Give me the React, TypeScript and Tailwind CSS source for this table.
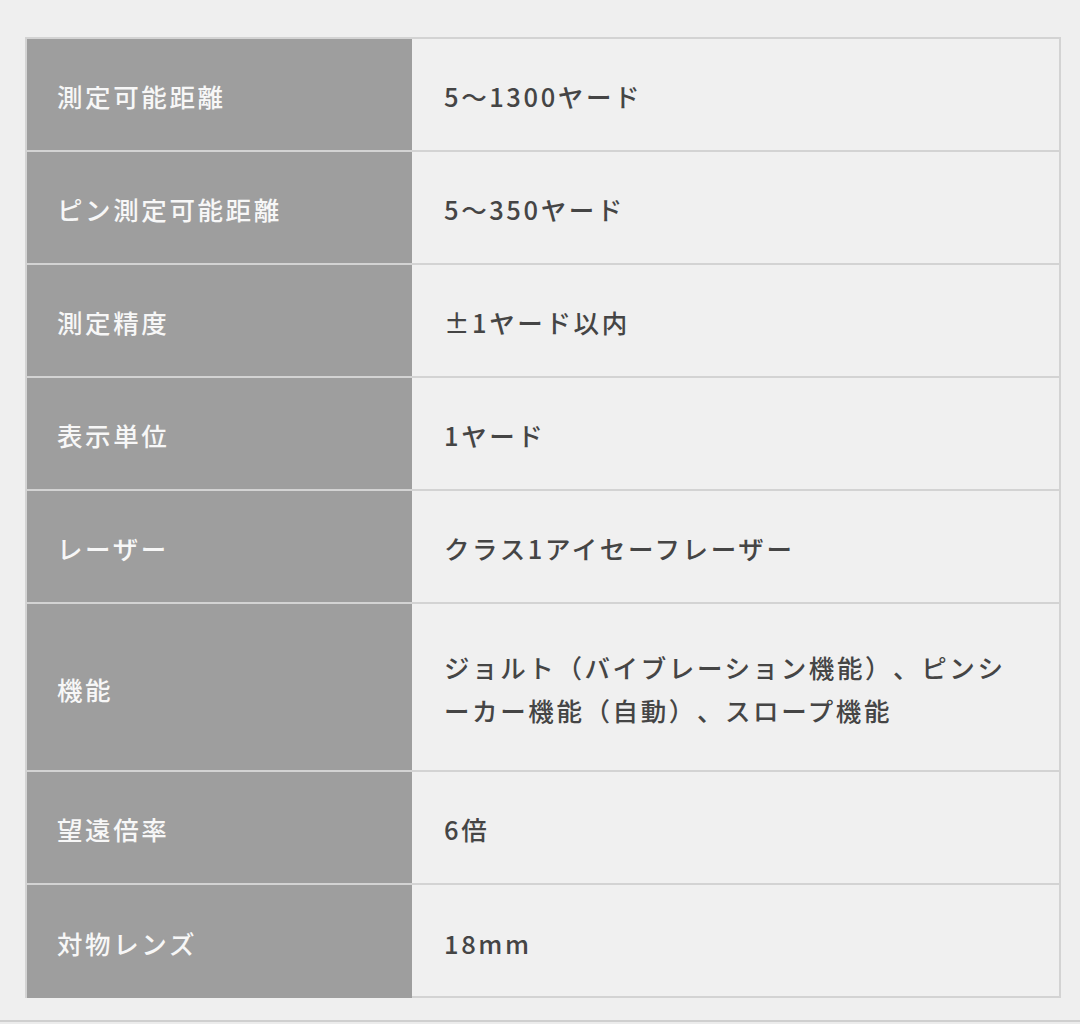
import React from "react";

const rows: { label: string; value: React.ReactNode; tall?: boolean }[] = [
  { label: "測定可能距離", value: "5～1300ヤード" },
  { label: "ピン測定可能距離", value: "5～350ヤード" },
  { label: "測定精度", value: "±1ヤード以内" },
  { label: "表示単位", value: "1ヤード" },
  { label: "レーザー", value: "クラス1アイセーフレーザー" },
  {
    label: "機能",
    value: (
      <>
        ジョルト（バイブレーション機能）、ピンシ
        <br />
        ーカー機能（自動）、スロープ機能
      </>
    ),
    tall: true,
  },
  { label: "望遠倍率", value: "6倍" },
  { label: "対物レンズ", value: "18mm" },
];

export default function App() {
  return (
    <div
      className="w-[1080px] h-[1024px] bg-[#efefef] overflow-hidden flex flex-col [text-spacing-trim:space-all]"
      style={{ fontFamily: '"Noto Sans CJK JP", "Noto Sans", sans-serif' }}
    >
      <div className="ml-[25px] mt-[37px] w-[1036px] h-[961px] border-2 border-[#d3d3d3] bg-[#f0f0f0]">
        {rows.map((r, i) => (
          <div
            key={i}
            className={
              "grid grid-cols-[385px_1fr] " +
              (r.tall ? "h-[168px] " : "h-[113px] ") +
              (i < rows.length - 1 ? "border-b-2 border-[#d3d3d3]" : "")
            }
          >
            <div className="bg-[#9e9e9e] flex items-center pl-[30px] pt-[2px] text-[25.5px] tracking-[2.6px] text-[#f7f7f7] font-medium leading-[43px]">
              {r.label}
            </div>
            <div className="flex items-center pl-[32px] pt-[2px] text-[25.5px] tracking-[2.6px] text-[#454545] font-medium leading-[43px] [text-spacing-trim:space-all]">
              <div>{r.value}</div>
            </div>
          </div>
        ))}
      </div>
      <div className="mt-[22px] h-[2px] bg-[#cfcfcf]" />
      <div className="flex-1 bg-[#ececec]" />
    </div>
  );
}
